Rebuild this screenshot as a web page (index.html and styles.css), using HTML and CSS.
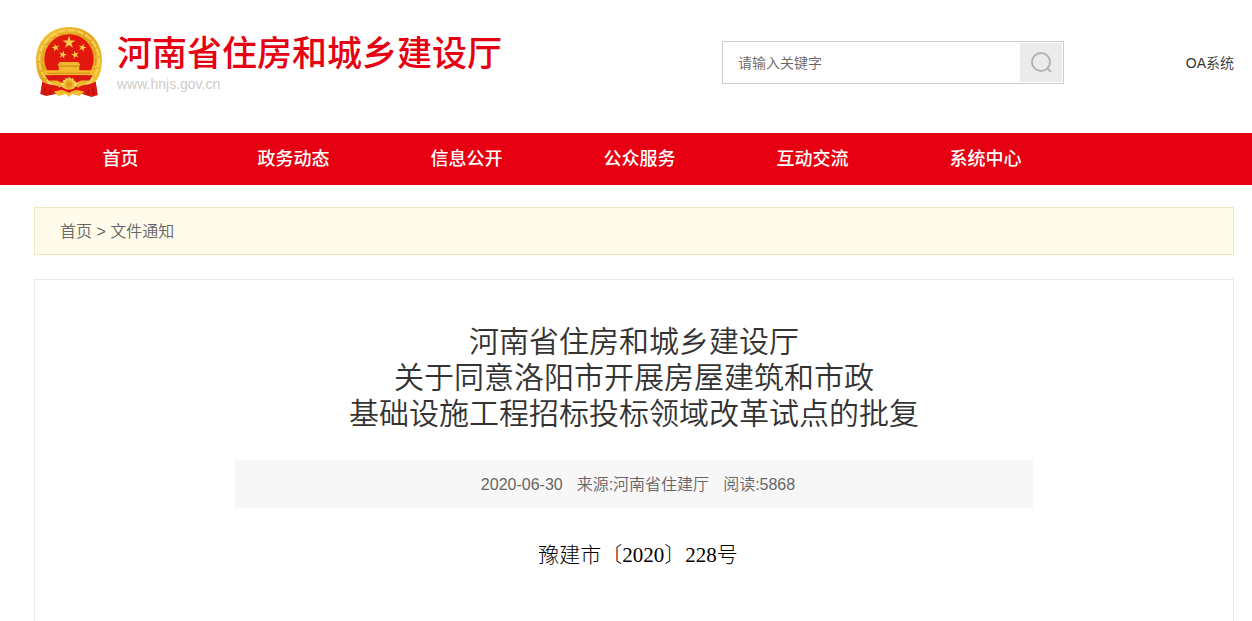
FILE: index.html
```html
<!DOCTYPE html>
<html lang="zh-CN">
<head>
  <meta charset="UTF-8">
  <title>河南省住房和城乡建设厅</title>
  <link rel="stylesheet" href="styles.css">
</head>
<body>
<header class="header">
  <div class="logo">
    <svg class="emblem" viewBox="0 0 68 70" aria-hidden="true">
      <defs>
        <linearGradient id="gold" x1="0" y1="0" x2="1" y2="1">
          <stop offset="0" stop-color="#f6c93c"/>
          <stop offset=".5" stop-color="#e5a41d"/>
          <stop offset="1" stop-color="#f3c834"/>
        </linearGradient>
        <path id="star" d="M0-1 .2245-.309 .951-.309 .363.118 .588.809 0 .382-.588.809-.363.118-.951-.309-.2245-.309Z"/>
      </defs>
      <path d="M34 1C15 1 2 15 2 33c0 11 3 18 8 23h48c5-5 8-12 8-23C66 15 53 1 34 1Z" fill="url(#gold)"/>
      <circle cx="34" cy="33" r="29" fill="none" stroke="#f5d258" stroke-width="2" stroke-dasharray="7 2"/>
      <circle cx="34" cy="33" r="26" fill="none" stroke="#d9981b" stroke-width="1" stroke-dasharray="5 3"/>
      <circle cx="34" cy="32" r="24" fill="#e2180f"/>
      <g fill="#f7cd4a">
        <use href="#star" transform="translate(34 16) scale(6.5)"/>
        <use href="#star" transform="translate(21 21) rotate(-15) scale(4)"/>
        <use href="#star" transform="translate(47 21) rotate(15) scale(4)"/>
        <use href="#star" transform="translate(28 28) rotate(15) scale(4)"/>
        <use href="#star" transform="translate(40 28) rotate(-15) scale(4)"/>
      </g>
      <path d="M25 35h18l2 3-1 1v4h15v5H9v-5h15v-4l-1-1Z" fill="#f2b92c"/>
      <path d="M24 39h20M13 46h42" stroke="#d28a1c" stroke-width="1"/>
      <path d="M11 48h46l-3 5H14Z" fill="#d9180f"/>
      <path d="M8 54c7 6 44 6 52 0l2 13-6 2-9-3H21l-9 2-6-2Z" fill="#d9180f"/>
      <path d="M17 54q8-1 11 4l-3 2q-5-4-8-3ZM51 54q-8-1-11 4l3 2q5-4 8-3Z" fill="#edb72b"/>
      <circle cx="34" cy="57" r="6" fill="#f0b929" stroke="#f9de6c" stroke-width="2" stroke-dasharray="2 1"/>
      <circle cx="34" cy="57" r="3" fill="#e09a20"/>
      <path d="M8 59q10 6 19 2 7 5 14 0 9 4 19-2" fill="none" stroke="#e2180f" stroke-width="3"/>
      <path d="M19 64l8-2 7 3 7-3 8 2-5 4-7-2-3 3-3-3-7 2Z" fill="#f2bd2e"/>
      <path d="M11 60l-1 7M15 62l1 5M57 60l1 7M53 62l-1 5" stroke="#a80e0b" stroke-width="1"/>
    </svg>
    <div class="logo-text">
      <div class="site-name">河南省住房和城乡建设厅</div>
      <div class="site-url">www.hnjs.gov.cn</div>
    </div>
  </div>
  <form class="search">
    <input type="text" class="search-input" placeholder="请输入关键字" aria-label="请输入关键字">
    <button type="button" class="search-btn" aria-label="搜索">
      <svg class="search-icon" viewBox="0 0 24 24" aria-hidden="true">
        <circle cx="12" cy="11" r="9"/>
        <path d="M18 17l4 4"/>
      </svg>
    </button>
  </form>
  <a class="oa-link" href="#">OA系统</a>
</header>

<nav class="nav">
  <a href="#">首页</a>
  <a href="#">政务动态</a>
  <a href="#">信息公开</a>
  <a href="#">公众服务</a>
  <a href="#">互动交流</a>
  <a href="#">系统中心</a>
</nav>

<main class="main">
  <div class="breadcrumb">
    <a href="#">首页</a> &gt; <a href="#">文件通知</a>
  </div>
  <article class="article">
    <h1>河南省住房和城乡建设厅<br>关于同意洛阳市开展房屋建筑和市政<br>基础设施工程招标投标领域改革试点的批复</h1>
    <div class="meta">
      <span>2020-06-30</span>
      <span>来源:河南省住建厅</span>
      <span>阅读:5868</span>
    </div>
    <p class="doc-no">豫建市〔2020〕228号</p>
  </article>
</main>
</body>
</html>
```

FILE: styles.css
```css
* {
  box-sizing: border-box;
}
body {
  display: flex;
  flex-direction: column;
  min-height: 100vh;
  margin: 0;
  background: #fff;
  color: #333;
  font-family: "Liberation Sans", "Noto Sans CJK SC", sans-serif;
  font-size: 16px;
  font-weight: 350;
}
a {
  color: inherit;
  text-decoration: none;
}

/* 顶部 */
.header {
  display: flex;
  align-items: flex-start;
  padding: 26px 18px 35px 34px;
}
.logo {
  display: flex;
  flex: 1;
  gap: 13px;
}
.emblem {
  width: 70px;
  height: 72px;
}
.logo-text {
  padding-top: 6px;
}
.site-name {
  color: #e60012;
  font-size: 35px;
  font-weight: 500;
  line-height: 44px;
  white-space: nowrap;
}
.site-url {
  color: #ccc;
  font-size: 14px;
  line-height: 16px;
}
.search {
  display: flex;
  width: 342px;
  height: 43px;
  margin-top: 15px;
  padding: 1px;
  border: 1px solid #ccc;
}
.search-input {
  flex: 1;
  min-width: 0;
  padding: 0 14px;
  border: 0;
  outline: 0;
  background: none;
  font-family: inherit;
  font-size: 14px;
  font-weight: 350;
}
.search-input::placeholder {
  color: #666;
}
.search-btn {
  width: 42px;
  padding: 0;
  border: 0;
  background: #ebebeb;
  cursor: pointer;
}
.search-icon {
  display: block;
  width: 24px;
  height: 24px;
  margin: 0 auto;
  fill: none;
  stroke: #b3b3b3;
  stroke-width: 2;
}
.oa-link {
  width: 170px;
  margin-top: 27px;
  font-size: 14px;
  line-height: 20px;
  text-align: right;
}

/* 导航 */
.nav {
  display: flex;
  padding: 0 18px 0 34px;
  background: #e60012;
}
.nav a {
  width: 173px;
  color: #fff;
  font-size: 18px;
  font-weight: 500;
  line-height: 52px;
  text-align: center;
}

/* 正文 */
.main {
  display: flex;
  flex: 1;
  flex-direction: column;
  padding: 22px 18px 0 34px;
}
.breadcrumb {
  padding: 2px 25px 0;
  border: 1px solid #f0e6c0;
  background: #fffbea;
  color: #666;
  line-height: 44px;
}
.article {
  flex: 1;
  margin-top: 24px;
  padding: 44px 200px 0;
  border: 1px solid #eaeaea;
  border-bottom: 0;
}
.article h1 {
  margin: 0 -50px;
  font-size: 30px;
  font-weight: 350;
  line-height: 36px;
  text-align: center;
}
.meta {
  display: flex;
  justify-content: center;
  gap: 14px;
  margin-top: 28px;
  padding: 2px 0 0 8px;
  background: #f7f7f7;
  color: #666;
  line-height: 46px;
}
.doc-no {
  margin: 32px 0 0;
  padding-left: 8px;
  color: #000;
  font-family: "Liberation Serif", "Noto Sans CJK SC", serif;
  font-size: 21px;
  font-weight: 300;
  line-height: 30px;
  text-align: center;
}
```
